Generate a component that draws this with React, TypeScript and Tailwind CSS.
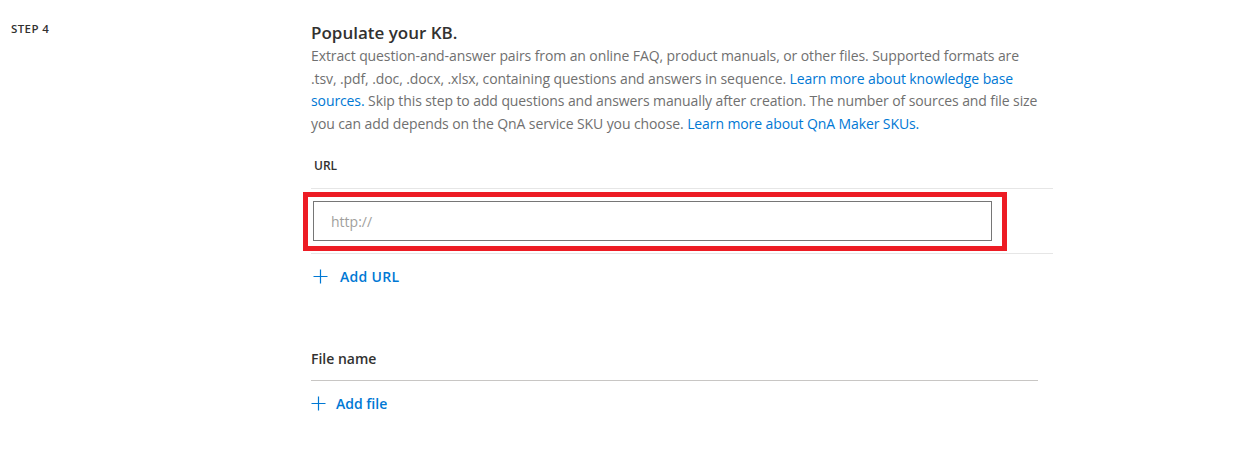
import React from 'react';

const font = { fontFamily: '"Segoe UI", "Open Sans", "Noto Sans", sans-serif' };

function PlusIcon() {
  return (
    <svg width="15" height="15" viewBox="0 0 15 15" className="shrink-0">
      <path d="M7.5 0.5v14M0.5 7.5h14" stroke="#0078d4" strokeWidth="1.2" fill="none" />
    </svg>
  );
}

function Link({ children }: { children: React.ReactNode }) {
  return <a className="text-[#0078d4] cursor-pointer">{children}</a>;
}

export default function App() {
  return (
    <div className="flex bg-white min-h-[457px] w-[1237px]" style={font}>
      <div className="w-[311px] shrink-0 pl-[11px] pt-[22px]">
        <div className="text-[11.5px] leading-[14px] font-semibold text-[#323130] tracking-[0.4px]">STEP 4</div>
      </div>

      <div className="flex-1 pt-[21px]">
        <h2 className="text-[17px] leading-[23px] font-semibold text-[#323130]">Populate your KB.</h2>
        <div className="text-[14px] leading-[22.5px] text-[#707070] tracking-[-0.1px] pt-[1px]">
          <div className="whitespace-nowrap">
            Extract question-and-answer pairs from an online FAQ, product manuals, or other files. Supported formats are
          </div>
          <div className="whitespace-nowrap">
            .tsv, .pdf, .doc, .docx, .xlsx, containing questions and answers in sequence.{' '}
            <Link>Learn more about knowledge base</Link>
          </div>
          <div className="whitespace-nowrap">
            <Link>sources.</Link> Skip this step to add questions and answers manually after creation. The number of sources and file size
          </div>
          <div className="whitespace-nowrap">
            you can add depends on the QnA service SKU you choose. <Link>Learn more about QnA Maker SKUs.</Link>
          </div>
        </div>

        <div className="w-[742px] mt-[23px]">
          <div className="pl-[3px] pb-[14px] text-[12px] leading-[16px] font-semibold text-[#323130]">URL</div>
          <div className="border-t border-b border-[#e6e6e6] py-[12px]">
            <div className="relative w-[679px] ml-[2px]">
              <div className="h-[40px] border border-[#767676] flex items-center pl-[17px] text-[14px] text-[#a19f9d]">
                http://
              </div>
              <div className="absolute -left-[10px] -top-[9px] w-[704px] h-[59px] border-[5px] border-[#ed1c24] pointer-events-none" />
            </div>
          </div>
          <div className="flex items-center gap-[12px] pl-[2px] mt-[12px] h-[20px]">
            <PlusIcon />
            <span className="text-[14px] font-semibold text-[#0078d4] tracking-[0.3px]">Add URL</span>
          </div>
        </div>

        <div className="w-[727px] mt-[63px]">
          <div className="pb-[11px] text-[14px] leading-[20px] font-semibold text-[#323130]">File name</div>
          <div className="border-t border-[#c8c6c4]" />
          <div className="flex items-center gap-[10px] mt-[12px] h-[20px]">
            <PlusIcon />
            <span className="text-[14px] font-semibold text-[#0078d4]">Add file</span>
          </div>
        </div>
      </div>
    </div>
  );
}
